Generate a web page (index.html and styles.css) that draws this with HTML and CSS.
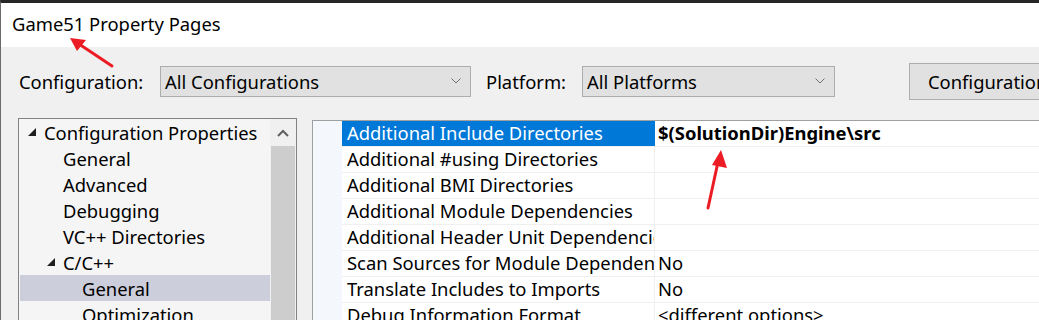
FILE: index.html
```html
<!DOCTYPE html>
<html lang="en">
<head>
    <meta charset="UTF-8">
    <title>Game51 Property Pages</title>
    <link rel="stylesheet" href="styles.css">
</head>
<body>
<div class="window">
    <!-- Title bar -->
    <div class="titlebar">Game51 Property Pages</div>

    <!-- Configuration / Platform selectors -->
    <div class="toolbar">
        <span class="label">Configuration:</span>
        <div class="select select-config">
            <span>All Configurations</span>
            <svg class="chev" width="10" height="6" viewBox="0 0 10 6"><polyline points="0.5,0.5 5,5 9.5,0.5" fill="none" stroke="#707070" stroke-width="1"/></svg>
        </div>
        <span class="label label-platform">Platform:</span>
        <div class="select select-platform">
            <span>All Platforms</span>
            <svg class="chev" width="10" height="6" viewBox="0 0 10 6"><polyline points="0.5,0.5 5,5 9.5,0.5" fill="none" stroke="#707070" stroke-width="1"/></svg>
        </div>
        <button class="manager-btn">Configuration Manager...</button>
    </div>

    <div class="main">
        <!-- Tree -->
        <div class="tree">
            <div class="tree-items">
                <div class="node lvl0"><svg class="tri" width="8" height="8" viewBox="0 0 8 8"><polygon points="8,0 8,8 0,8" fill="#1e1e1e"/></svg>Configuration Properties</div>
                <div class="node lvl1">General</div>
                <div class="node lvl1">Advanced</div>
                <div class="node lvl1">Debugging</div>
                <div class="node lvl1">VC++ Directories</div>
                <div class="node lvl1 open"><svg class="tri" width="8" height="8" viewBox="0 0 8 8"><polygon points="8,0 8,8 0,8" fill="#1e1e1e"/></svg>C/C++</div>
                <div class="node lvl2 selected">General</div>
                <div class="node lvl2">Optimization</div>
            </div>
            <div class="scrollbar">
                <div class="scroll-up">
                    <svg width="12" height="8" viewBox="0 0 12 8"><polyline points="1,7 6,2 11,7" fill="none" stroke="#606060" stroke-width="2"/></svg>
                </div>
                <div class="scroll-thumb"></div>
            </div>
        </div>

        <!-- Property grid -->
        <div class="grid-panel">
            <div class="gutter"></div>
            <div class="grid">
                <div class="row selected"><div class="name">Additional Include Directories</div><div class="value bold">$(SolutionDir)Engine\src</div></div>
                <div class="row"><div class="name">Additional #using Directories</div><div class="value"></div></div>
                <div class="row"><div class="name">Additional BMI Directories</div><div class="value"></div></div>
                <div class="row"><div class="name">Additional Module Dependencies</div><div class="value"></div></div>
                <div class="row"><div class="name">Additional Header Unit Dependencies</div><div class="value"></div></div>
                <div class="row"><div class="name">Scan Sources for Module Dependencies</div><div class="value">No</div></div>
                <div class="row"><div class="name">Translate Includes to Imports</div><div class="value">No</div></div>
                <div class="row"><div class="name">Debug Information Format</div><div class="value">&lt;different options&gt;</div></div>
            </div>
        </div>
    </div>

    <!-- Annotation arrows -->
    <svg class="arrow arrow-title" width="50" height="34" viewBox="0 0 50 34">
        <line x1="45" y1="30" x2="12" y2="8" stroke="#ec1c24" stroke-width="3" stroke-linecap="round"/>
        <polygon points="3,2 19,4 10,15" fill="#ec1c24"/>
    </svg>
    <svg class="arrow arrow-value" width="30" height="64" viewBox="0 0 30 64">
        <line x1="4" y1="60" x2="14" y2="14" stroke="#ec1c24" stroke-width="3" stroke-linecap="round"/>
        <polygon points="17,2 23,20 8,17" fill="#ec1c24"/>
    </svg>
</div>
</body>
</html>
```

FILE: styles.css
```css
/* Window chrome */
body {
    margin: 0;
    background-color: #f0f0f0;
    font-family: 'Noto Sans', 'Open Sans', sans-serif;
    font-size: 18.4px;
    color: #000;
    overflow: hidden;
}

.window {
    position: relative;
    height: 320px;
    border-top: 3px solid #262626;
    border-left: 1px solid #6b6b6b;
    box-sizing: border-box;
    overflow: hidden;
}

.titlebar {
    height: 44px;
    background-color: #fff;
    padding-left: 11px;
    line-height: 42px;
}

/* Toolbar */
.toolbar {
    display: flex;
    align-items: center;
    height: 36px;
    padding: 16px 0 19px 18px;
    white-space: nowrap;
}

.toolbar > * {
    flex-shrink: 0;
}

.label {
    width: 141px;
}

.label-platform {
    width: 96px;
    margin-left: 15px;
}

.select {
    display: flex;
    align-items: center;
    justify-content: space-between;
    height: 29px;
    border: 1px solid #adadad;
    background-color: #e1e1e1;
    padding: 0 9px 0 4px;
    box-sizing: content-box;
}

.select-config {
    width: 296px;
}

.select-platform {
    width: 238px;
}

.manager-btn {
    margin-left: 74px;
    height: 37px;
    padding: 0 18px;
    border: 1px solid #adadad;
    background-color: #e1e1e1;
    font-family: inherit;
    font-size: 18.4px;
    white-space: nowrap;
    text-align: left;
}

/* Tree */
.main {
    display: flex;
    align-items: flex-start;
    padding-left: 17px;
}

.tree {
    display: flex;
    flex-shrink: 0;
    width: 277px;
    height: 220px;
    border: 1px solid #828282;
    background-color: #f5f5f5;
}

.tree-items {
    flex: 1;
    overflow: hidden;
}

.node {
    display: flex;
    align-items: center;
    height: 26px;
    margin-left: 1px;
    white-space: nowrap;
}

.node.lvl0 { padding-left: 8px; }
.node.lvl1 { padding-left: 43px; }
.node.lvl1.open { padding-left: 27px; }
.node.lvl2 { padding-left: 62px; }

.tri {
    flex-shrink: 0;
    margin-right: 8px;
}

.node.selected {
    background-color: #cccedb;
}

.scrollbar {
    width: 26px;
    background-color: #f0f0f0;
}

.scroll-up {
    height: 27px;
    display: flex;
    align-items: center;
    justify-content: center;
}

.scroll-thumb {
    margin: 0 1px;
    height: 200px;
    background-color: #cdcdcd;
}

/* Property grid */
.grid-panel {
    display: flex;
    flex: 1;
    height: 220px;
    margin: 2px 0 0 15px;
    border-top: 1px solid #a0a0a0;
    border-left: 1px solid #a0a0a0;
    background-color: #fff;
}

.gutter {
    width: 29px;
    flex-shrink: 0;
    background-color: #f4f7fb;
}

.grid {
    flex: 1;
}

.row {
    display: flex;
    height: 26px;
    border-bottom: 1px solid #f0f0f0;
    box-sizing: border-box;
}

.row .name {
    width: 307px;
    flex-shrink: 0;
    padding-left: 5px;
    border-right: 1px solid #f0f0f0;
    line-height: 24px;
    white-space: nowrap;
    overflow: hidden;
}

.row .value {
    padding-left: 3px;
    line-height: 24px;
    white-space: nowrap;
}

.row .value.bold {
    font-weight: bold;
}

.row.selected .name {
    background-color: #0078d7;
    color: #fff;
    border-right-color: #0078d7;
}

/* Red annotation arrows */
.arrow {
    position: absolute;
}

.arrow-title {
    left: 66px;
    top: 33px;
}

.arrow-value {
    left: 703px;
    top: 145px;
}
```
